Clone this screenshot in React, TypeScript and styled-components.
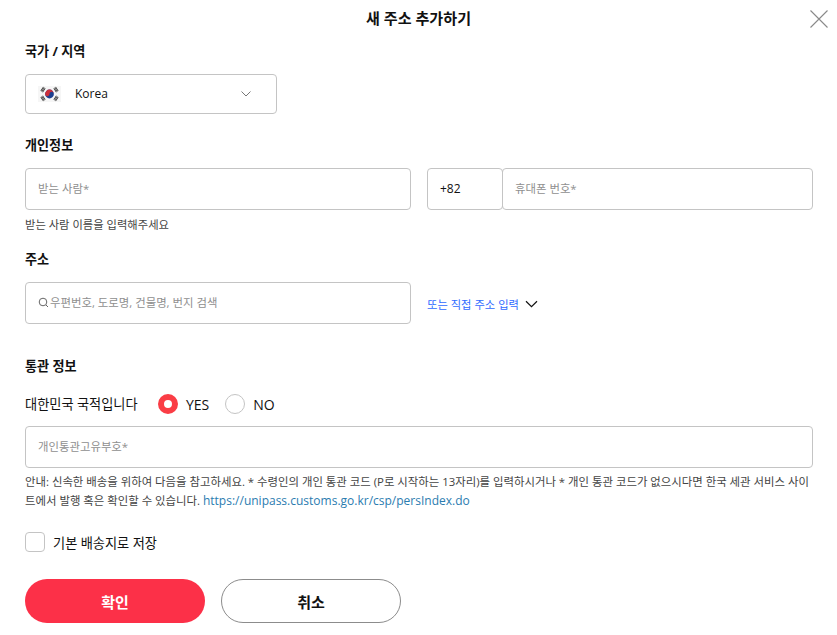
import React from "react";
import styled, { createGlobalStyle } from "styled-components";

const Global = createGlobalStyle`
  html, body { margin: 0; padding: 0; background: #fff; }
  body { font-family: "Open Sans", "Noto Sans CJK KR", sans-serif; color: #111; }
  * { box-sizing: border-box; }
`;

const Page = styled.div`
  width: 837px;
  height: 635px;
  padding: 0 24px 0 25px;
  overflow: hidden;
`;
const Header = styled.header`
  height: 36px;
  display: flex;
  align-items: center;
  justify-content: center;
  position: relative;
  margin-right: -24px;
  margin-left: -25px;
`;
const Title = styled.h1`
  margin: 0;
  font-size: 15.1px;
  font-weight: 700;
  line-height: 33px;
`;
const Close = styled.button`
  position: absolute;
  right: 8px;
  top: 9px;
  width: 20px;
  height: 20px;
  padding: 0;
  border: 0;
  background: none;
  color: #8a8a8a;
  svg { display: block; }
`;
const SectionLabel = styled.h2<{ $top: number; $bottom: number }>`
  margin: ${(p) => p.$top}px 0 ${(p) => p.$bottom}px;
  font-size: 13.1px;
  line-height: 20px;
  font-weight: 700;
  color: #111;
`;
const Select = styled.div`
  width: 252px;
  height: 40px;
  border: 1px solid #c4c4c4;
  border-radius: 4px;
  display: flex;
  align-items: center;
  padding: 0 24px 0 12px;
  font-size: 12px;
  color: #111;
`;
const Flag = styled.svg`
  width: 23px;
  height: 16px;
  margin-right: 14px;
  flex: none;
`;
const Grow = styled.span`
  flex: 1;
  margin-top: -2px;
`;
const FieldRow = styled.div`
  display: flex;
  align-items: center;
`;
const Field = styled.div<{ $w?: number; $joined?: boolean }>`
  height: 42px;
  border: 1px solid #c4c4c4;
  border-radius: 4px;
  display: flex;
  align-items: center;
  padding: 0 12px 2px;
  width: ${(p) => (p.$w ? `${p.$w}px` : "auto")};
  flex: ${(p) => (p.$w ? "none" : "1")};
  margin-left: ${(p) => (p.$joined ? "-1px" : "0")};
  font-size: 12px;
  color: #111;
`;
const Placeholder = styled.span`
  font-size: 11.4px;
  color: #8f8f8f;
`;
const SearchIcon = styled.svg`
  width: 12px;
  height: 11px;
  flex: none;
`;
const PhoneGroup = styled.div`
  display: flex;
  margin-left: 16px;
  flex: 1;
`;
const Hint = styled.p`
  margin: 6px 0 0;
  font-size: 11.3px;
  line-height: 18px;
  color: #444;
`;
const ManualLink = styled.a`
  margin-left: 16px;
  margin-top: 2px;
  display: flex;
  align-items: center;
  gap: 6px;
  font-size: 11.3px;
  color: #2f6bff;
  svg { color: #111; }
`;
const NationalRow = styled.div`
  display: flex;
  align-items: center;
  height: 24px;
  margin-bottom: 10px;
  font-size: 13.2px;
`;
const NationalText = styled.span`
  width: 133px;
  margin-top: -2px;
`;
const Radio = styled.span<{ $on?: boolean }>`
  width: 20px;
  height: 20px;
  border-radius: 50%;
  flex: none;
  background: #fff;
  border: ${(p) => (p.$on ? "6px solid #fa3d45" : "1px solid #c4c4c4")};
  margin-right: 8px;
`;
const RadioText = styled.span`
  font-size: 14px;
  color: #111;
  margin-right: 16px;
`;
const Note = styled.p`
  margin: 4px 0 0;
  font-size: 11.4px;
  line-height: 19px;
  color: #444;
  width: 788px;
  word-break: break-all;
`;
const NoteLink = styled.a`
  color: #2b7cb0;
  font-size: 12px;
  line-height: 1;
`;
const CheckRow = styled.label`
  display: flex;
  align-items: center;
  gap: 8px;
  margin-top: 22px;
  height: 20px;
  font-size: 13.2px;
  color: #111;
`;
const Check = styled.span`
  width: 20px;
  height: 20px;
  border: 1px solid #c4c4c4;
  border-radius: 4px;
`;
const Buttons = styled.div`
  display: flex;
  gap: 16px;
  margin-top: 27px;
`;
const Btn = styled.button<{ $primary?: boolean }>`
  width: 180px;
  height: 44px;
  border-radius: 22px;
  font: 700 15px "Open Sans", "Noto Sans CJK KR", sans-serif;
  background: ${(p) => (p.$primary ? "#fc3048" : "#fff")};
  color: ${(p) => (p.$primary ? "#fff" : "#111")};
  border: ${(p) => (p.$primary ? "0" : "1px solid #8c8c8c")};
`;

function KoreaFlag() {
  const bar = (x: number, y: number, r: number) => (
    <g transform={`rotate(${r} ${x} ${y})`} fill="#333">
      <rect x={x - 2.4} y={y - 1.5} width={4.8} height={0.8} />
      <rect x={x - 2.4} y={y - 0.4} width={4.8} height={0.8} />
      <rect x={x - 2.4} y={y + 0.7} width={4.8} height={0.8} />
    </g>
  );
  return (
    <Flag viewBox="0 0 23 16">
      <rect width="23" height="16" fill="#f6f6f6" />
      {bar(5, 3.6, -56)}
      {bar(18, 3.6, 56)}
      {bar(5, 12.4, 56)}
      {bar(18, 12.4, -56)}
      <circle cx="11.5" cy="8" r="4.4" fill="#1d3f8f" />
      <path d="M7.1 8a4.4 4.4 0 0 1 8.8 0c0 -1.2 -1 -2.2 -2.2 -2.2S11.5 6.8 11.5 8s-1 2.2-2.2 2.2S7.1 9.2 7.1 8z" fill="#cd2e3a" />
    </Flag>
  );
}

export default function App() {
  return (
    <Page>
      <Global />
      <Header>
        <Title>새 주소 추가하기</Title>
        <Close aria-label="닫기">
          <svg width="20" height="20" viewBox="0 0 20 20" fill="none" stroke="currentColor" strokeWidth="1.1">
            <path d="M1.5 1.5 18.5 18.5M18.5 1.5 1.5 18.5" />
          </svg>
        </Close>
      </Header>
      <SectionLabel $top={5} $bottom={13}>국가 / 지역</SectionLabel>
      <Select>
        <KoreaFlag />
        <Grow>Korea</Grow>
        <svg width="12" height="8" viewBox="0 0 12 8" fill="none" stroke="#777" strokeWidth="1">
          <path d="M1.5 1.5 6 6l4.5-4.5" />
        </svg>
      </Select>
      <SectionLabel $top={21} $bottom={13}>개인정보</SectionLabel>
      <FieldRow>
        <Field $w={386}><Placeholder>받는 사람*</Placeholder></Field>
        <PhoneGroup>
          <Field $w={76}>+82</Field>
          <Field $joined><Placeholder>휴대폰 번호*</Placeholder></Field>
        </PhoneGroup>
      </FieldRow>
      <Hint>받는 사람 이름을 입력해주세요</Hint>
      <SectionLabel $top={15} $bottom={13}>주소</SectionLabel>
      <FieldRow>
        <Field $w={386}>
          <SearchIcon viewBox="0 0 12 11" fill="none" stroke="#666" strokeWidth="1">
            <circle cx="5" cy="5" r="3.8" />
            <path d="M8 8l2 2" />
          </SearchIcon>
          <Placeholder>우편번호, 도로명, 건물명, 번지 검색</Placeholder>
        </Field>
        <ManualLink>
          또는 직접 주소 입력
          <svg width="13" height="8" viewBox="0 0 13 8" fill="none" stroke="currentColor" strokeWidth="1.2">
            <path d="M1 1.2 6.5 6.6 12 1.2" />
          </svg>
        </ManualLink>
      </FieldRow>
      <SectionLabel $top={32} $bottom={16}>통관 정보</SectionLabel>
      <NationalRow>
        <NationalText>대한민국 국적입니다</NationalText>
        <Radio $on />
        <RadioText>YES</RadioText>
        <Radio />
        <RadioText>NO</RadioText>
      </NationalRow>
      <Field><Placeholder>개인통관고유부호*</Placeholder></Field>
      <Note>
        안내: 신속한 배송을 위하여 다음을 참고하세요. * 수령인의 개인 통관 코드 (P로 시작하는 13자리)를 입력하시거나 * 개인 통관 코드가 없으시다면 한국 세관 서비스 사이트에서 발행 혹은 확인할 수 있습니다.{" "}
        <NoteLink>https://unipass.customs.go.kr/csp/persIndex.do</NoteLink>
      </Note>
      <CheckRow>
        <Check />
        기본 배송지로 저장
      </CheckRow>
      <Buttons>
        <Btn $primary>확인</Btn>
        <Btn>취소</Btn>
      </Buttons>
    </Page>
  );
}
